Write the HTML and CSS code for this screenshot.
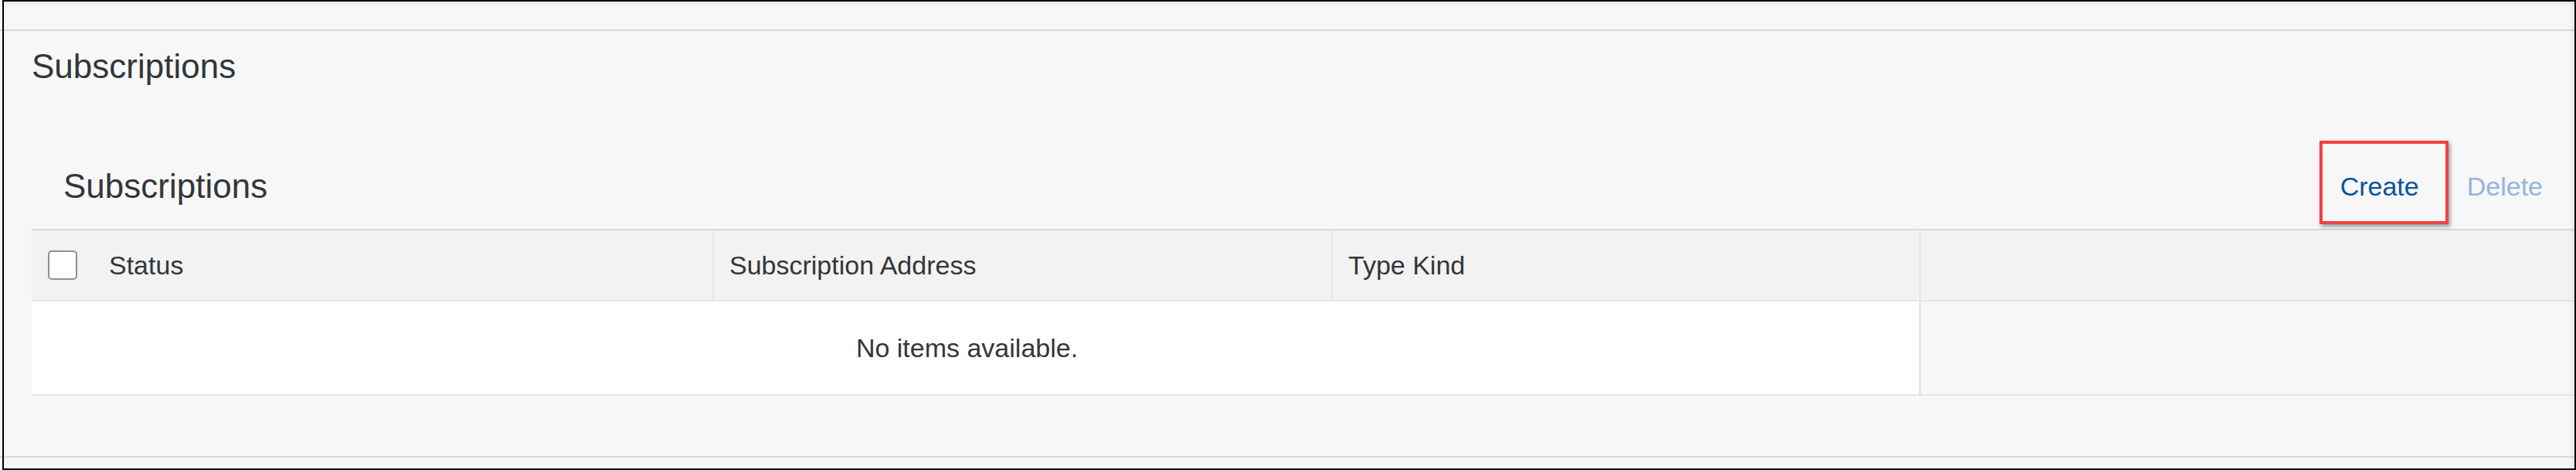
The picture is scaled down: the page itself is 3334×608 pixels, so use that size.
FILE: index.html
```html
<!DOCTYPE html>
<html lang="en">
<head>
<meta charset="utf-8">
<title>Subscriptions</title>
<link rel="stylesheet" href="styles.css">
</head>
<body>
  <div class="topbar"></div>
  <h1 class="page-title">Subscriptions</h1>
  <section class="section">
    <div class="toolbar">
      <h2 class="section-title">Subscriptions</h2>
      <div class="actions">
        <button class="btn btn-create" type="button">Create</button>
        <button class="btn btn-delete" type="button" disabled>Delete</button>
      </div>
    </div>
    <div class="table">
      <div class="th th-first">
        <span class="checkbox"></span>
        <span class="th-label">Status</span>
      </div>
      <div class="th"><span class="th-label">Subscription Address</span></div>
      <div class="th"><span class="th-label">Type Kind</span></div>
      <div class="th th-filler"></div>
      <div class="td-empty">No items available.</div>
      <div class="td-filler"></div>
    </div>
  </section>
  <div class="footer"></div>
  <div class="frame"></div>
</body>
</html>
```
FILE: styles.css
```css
html, body {
  margin: 0;
  padding: 0;
  height: 608px;
  overflow: hidden;
}
body {
  background: #f7f7f7;
  font-family: "Liberation Sans", Arial, sans-serif;
  color: #32363a;
}
.topbar {
  height: 38px;
  border-bottom: 2px solid #d9d9d9;
}
.page-title {
  margin: 0;
  padding: 24px 0 0 41px;
  font-size: 44px;
  line-height: 44px;
  font-weight: normal;
}
.section {
  margin: 77px 2px 0 41px;
}
.toolbar {
  height: 111px;
  display: flex;
  align-items: center;
  justify-content: space-between;
  padding: 0 24px 0 41px;
}
.section-title {
  margin: 0;
  font-size: 44px;
  line-height: 44px;
  font-weight: normal;
}
.actions {
  display: flex;
  align-items: center;
  gap: 28px;
}
.btn {
  position: relative;
  border: 0;
  background: transparent;
  padding: 0 17px;
  margin: 0;
  font-family: "Liberation Sans", Arial, sans-serif;
  font-size: 34px;
  line-height: 34px;
}
.btn-create {
  color: #0854a0;
}
.btn-create::after {
  content: "";
  position: absolute;
  left: -10px;
  top: -42px;
  width: 167px;
  height: 108px;
  box-sizing: border-box;
  border: 4px solid #f24141;
  box-shadow: 2px 3px 5px rgba(0, 0, 0, 0.4);
}
.btn-delete {
  color: #95b5d8;
}
.table {
  display: grid;
  grid-template-columns: 883px 801px 761px 1fr;
}
.th {
  height: 90px;
  background: #f2f2f2;
  border-top: 2px solid #d9d9d9;
  border-bottom: 2px solid #e5e5e5;
  border-right: 2px solid #e5e5e5;
  display: flex;
  align-items: center;
  padding-left: 20px;
  font-size: 34px;
  line-height: 34px;
}
.th-first {
  padding-left: 21px;
  gap: 41px;
}
.th-filler {
  border-right: 0;
}
.checkbox {
  width: 38px;
  height: 38px;
  box-sizing: border-box;
  border: 2px solid #89919a;
  border-radius: 5px;
  background: #fff;
}
.td-empty {
  grid-column: 1 / 4;
  height: 120px;
  background: #fff;
  border-right: 2px solid #dddddd;
  border-bottom: 2px solid #e5e5e5;
  display: flex;
  align-items: center;
  justify-content: center;
  padding-right: 22px;
  font-size: 34px;
  line-height: 34px;
}
.td-filler {
  height: 120px;
  border-bottom: 2px solid #e5e5e5;
}
.footer {
  margin-top: 78px;
  border-top: 2px solid #d9d9d9;
}
.frame {
  position: fixed;
  top: 0;
  left: 3px;
  right: 0;
  bottom: 0;
  border: 2px solid #000;
  pointer-events: none;
  box-shadow: inset 0 6px 6px -3px rgba(0, 0, 0, 0.07), inset -6px 0 6px -3px rgba(0, 0, 0, 0.07);
}
```
